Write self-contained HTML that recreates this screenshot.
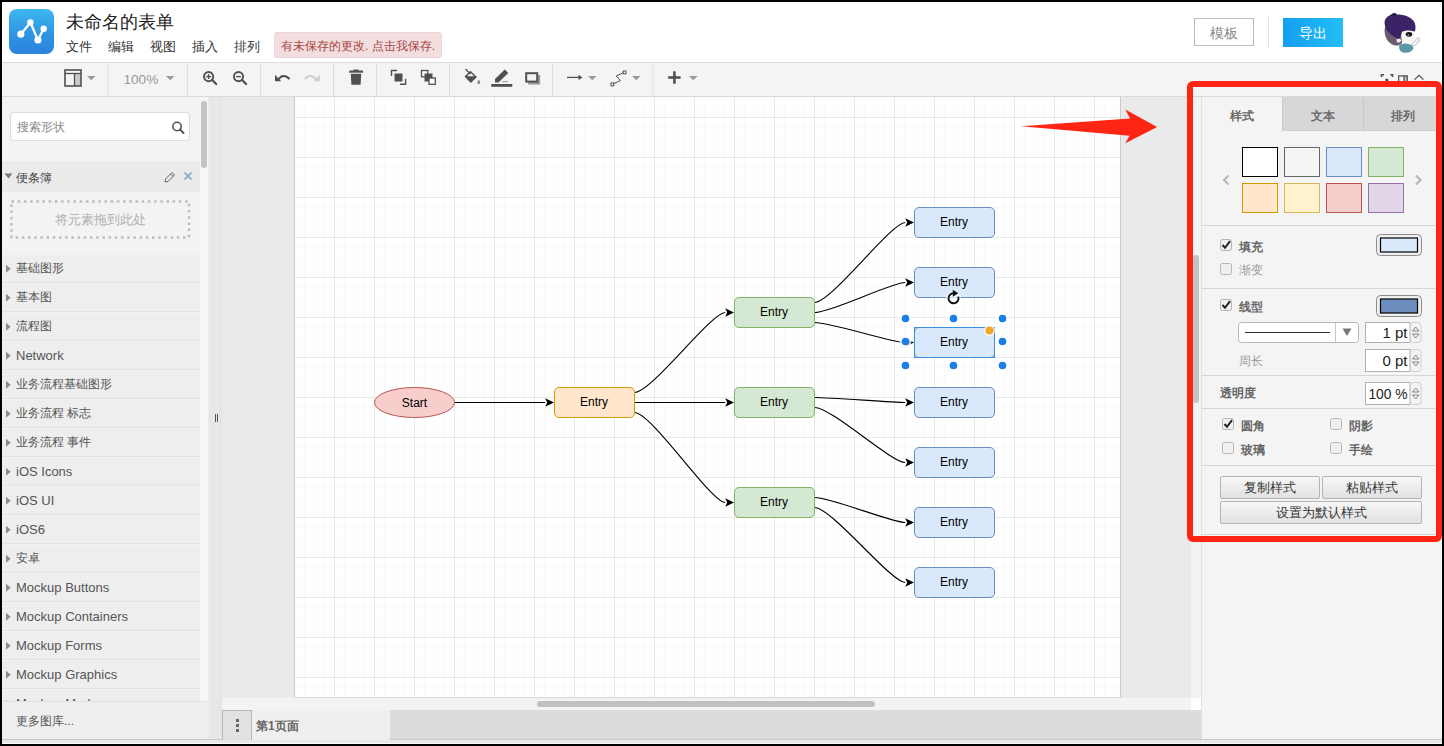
<!DOCTYPE html><html><head><meta charset="utf-8"><style>
*{box-sizing:border-box;margin:0;padding:0}
html,body{width:1444px;height:746px;overflow:hidden;background:#000;font-family:"Liberation Sans",sans-serif}
.a{position:absolute}
#app{position:absolute;left:2px;top:2px;width:1440px;height:742px;background:#f5f5f5;overflow:hidden}
</style></head><body>
<div id="app"><div class="a" style="left:-2px;top:-2px;width:1444px;height:746px">
<div class="a" style="left:0;top:0;width:1444px;height:63px;background:#fff;border-bottom:1px solid #dcdcdc"></div>
<div class="a" style="left:0;top:63px;width:1444px;height:34px;background:#f4f4f4;border-bottom:1px solid #dadada"></div>
<div class="a" style="left:0;top:97px;width:200px;height:609px;background:#f0f0f0"></div>
<div class="a" style="left:200px;top:97px;width:8px;height:613px;background:#f6f6f6"></div>
<div class="a" style="left:208px;top:97px;width:14px;height:643px;background:linear-gradient(90deg,#eeeeee 0px,#e5e5e5 2px,#e7e7e7 4px,#e7e7e7 11px,#e4e4e4 14px)"></div>
<div class="a" style="left:0;top:706px;width:208px;height:34px;background:#efefef;border-top:1px solid #e4e4e4"></div>
<div class="a" style="left:222px;top:97px;width:969px;height:601px;background:#eaeaea"></div>
<div class="a" style="left:294px;top:97px;width:826px;height:600px;background:#fff"></div>
<div class="a" style="left:1191px;top:97px;width:10px;height:613px;background:#f3f3f3"></div>
<div class="a" style="left:222px;top:698px;width:969px;height:12px;background:#f3f3f3"></div>
<div class="a" style="left:222px;top:710px;width:979px;height:30px;background:#dcdcdc"></div>
<div class="a" style="left:1201px;top:97px;width:243px;height:643px;background:#f4f4f4;border-left:1px solid #e2e2e2"></div>
<div class="a" style="left:0;top:739px;width:1444px;height:1px;background:#c8c8c8"></div>
<div class="a" style="left:0;top:740px;width:1444px;height:3px;background:#e8e8e8"></div><div class="a" style="left:0;top:743px;width:1444px;height:1px;background:#fafafa"></div>
<div class="a" style="left:294px;top:97px;width:826px;height:600px;background-color:#fff;background-image:linear-gradient(to right,#e8e8e8 1px,transparent 1px),linear-gradient(to bottom,#e8e8e8 1px,transparent 1px),linear-gradient(to right,#fafafa 1px,transparent 1px),linear-gradient(to bottom,#fafafa 1px,transparent 1px);background-size:40px 40px,40px 40px,10px 10px,10px 10px;background-position:0 20px,0 20px,0 0,0 0"></div>
<div class="a" style="left:294px;top:97px;width:1px;height:601px;background:#cbcbcb"></div>
<div class="a" style="left:1120px;top:97px;width:1px;height:601px;background:#cbcbcb"></div>
<div class="a" style="left:294px;top:697px;width:827px;height:1px;background:#d9d9d9"></div>
<svg class="a" style="left:0;top:0" width="1444" height="746" viewBox="0 0 1444 746"><defs><marker id="ah" markerWidth="10" markerHeight="10" refX="0" refY="5" orient="auto" markerUnits="userSpaceOnUse"><path d="M0,0.8 L8.8,5 L0,9.2 L2,5 Z" fill="#000"/></marker></defs><path d="M454.5,402.5 L545.2,402.5" stroke="#000" stroke-width="1.15" fill="none" marker-end="url(#ah)"/><path d="M634.5,392.5 C651.5,392.5 711.2,312.5 725.2,312.5" stroke="#000" stroke-width="1.15" fill="none" marker-end="url(#ah)"/><path d="M634.5,402.5 L725.2,402.5" stroke="#000" stroke-width="1.15" fill="none" marker-end="url(#ah)"/><path d="M634.5,412.5 C651.5,412.5 711.2,502.5 725.2,502.5" stroke="#000" stroke-width="1.15" fill="none" marker-end="url(#ah)"/><path d="M814.5,302.5 C831.5,302.5 891.2,222.5 905.2,222.5" stroke="#000" stroke-width="1.15" fill="none" marker-end="url(#ah)"/><path d="M814.5,312.5 C831.5,312.5 891.2,282.5 905.2,282.5" stroke="#000" stroke-width="1.15" fill="none" marker-end="url(#ah)"/><path d="M814.5,322.5 C831.5,322.5 891.2,342.5 905.2,342.5" stroke="#000" stroke-width="1.15" fill="none" marker-end="url(#ah)"/><path d="M814.5,397.5 C831.5,397.5 891.2,402.5 905.2,402.5" stroke="#000" stroke-width="1.15" fill="none" marker-end="url(#ah)"/><path d="M814.5,407.5 C831.5,407.5 891.2,462.5 905.2,462.5" stroke="#000" stroke-width="1.15" fill="none" marker-end="url(#ah)"/><path d="M814.5,497.5 C831.5,497.5 891.2,522.5 905.2,522.5" stroke="#000" stroke-width="1.15" fill="none" marker-end="url(#ah)"/><path d="M814.5,507.5 C831.5,507.5 891.2,582.5 905.2,582.5" stroke="#000" stroke-width="1.15" fill="none" marker-end="url(#ah)"/><ellipse cx="414.5" cy="402.5" rx="40" ry="15" fill="#f8cecc" stroke="#b85450"/><text x="414.5" y="406.5" text-anchor="middle" font-family="Liberation Sans" font-size="12" fill="#000">Start</text><rect x="554.5" y="387.5" width="80" height="30" rx="4.5" ry="4.5" fill="#ffe6cc" stroke="#d79b00"/><text x="594" y="405.8" text-anchor="middle" font-family="Liberation Sans" font-size="12" fill="#000">Entry</text><rect x="734.5" y="297.5" width="80" height="30" rx="4.5" ry="4.5" fill="#d5e8d4" stroke="#82b366"/><text x="774" y="315.8" text-anchor="middle" font-family="Liberation Sans" font-size="12" fill="#000">Entry</text><rect x="734.5" y="387.5" width="80" height="30" rx="4.5" ry="4.5" fill="#d5e8d4" stroke="#82b366"/><text x="774" y="405.8" text-anchor="middle" font-family="Liberation Sans" font-size="12" fill="#000">Entry</text><rect x="734.5" y="487.5" width="80" height="30" rx="4.5" ry="4.5" fill="#d5e8d4" stroke="#82b366"/><text x="774" y="505.8" text-anchor="middle" font-family="Liberation Sans" font-size="12" fill="#000">Entry</text><rect x="914.5" y="207.5" width="80" height="30" rx="4.5" ry="4.5" fill="#dae8fc" stroke="#6c8ebf"/><text x="954" y="225.8" text-anchor="middle" font-family="Liberation Sans" font-size="12" fill="#000">Entry</text><rect x="914.5" y="267.5" width="80" height="30" rx="4.5" ry="4.5" fill="#dae8fc" stroke="#6c8ebf"/><text x="954" y="285.8" text-anchor="middle" font-family="Liberation Sans" font-size="12" fill="#000">Entry</text><rect x="914.5" y="327.5" width="80" height="30" rx="4.5" ry="4.5" fill="#dae8fc" stroke="#6c8ebf"/><text x="954" y="345.8" text-anchor="middle" font-family="Liberation Sans" font-size="12" fill="#000">Entry</text><rect x="914.5" y="387.5" width="80" height="30" rx="4.5" ry="4.5" fill="#dae8fc" stroke="#6c8ebf"/><text x="954" y="405.8" text-anchor="middle" font-family="Liberation Sans" font-size="12" fill="#000">Entry</text><rect x="914.5" y="447.5" width="80" height="30" rx="4.5" ry="4.5" fill="#dae8fc" stroke="#6c8ebf"/><text x="954" y="465.8" text-anchor="middle" font-family="Liberation Sans" font-size="12" fill="#000">Entry</text><rect x="914.5" y="507.5" width="80" height="30" rx="4.5" ry="4.5" fill="#dae8fc" stroke="#6c8ebf"/><text x="954" y="525.8" text-anchor="middle" font-family="Liberation Sans" font-size="12" fill="#000">Entry</text><rect x="914.5" y="567.5" width="80" height="30" rx="4.5" ry="4.5" fill="#dae8fc" stroke="#6c8ebf"/><text x="954" y="585.8" text-anchor="middle" font-family="Liberation Sans" font-size="12" fill="#000">Entry</text><rect x="914.5" y="327.5" width="80" height="30" fill="none" stroke="#3d8fe0" stroke-width="1"/><circle cx="905.5" cy="318.5" r="6" fill="#fff" fill-opacity="0.8"/><circle cx="905.5" cy="318.5" r="3.8" fill="#1a7fe5"/><circle cx="905.5" cy="341.5" r="6" fill="#fff" fill-opacity="0.8"/><circle cx="905.5" cy="341.5" r="3.8" fill="#1a7fe5"/><circle cx="905.5" cy="365.5" r="6" fill="#fff" fill-opacity="0.8"/><circle cx="905.5" cy="365.5" r="3.8" fill="#1a7fe5"/><circle cx="953.5" cy="318.5" r="6" fill="#fff" fill-opacity="0.8"/><circle cx="953.5" cy="318.5" r="3.8" fill="#1a7fe5"/><circle cx="953.5" cy="365.5" r="6" fill="#fff" fill-opacity="0.8"/><circle cx="953.5" cy="365.5" r="3.8" fill="#1a7fe5"/><circle cx="1002.5" cy="318.5" r="6" fill="#fff" fill-opacity="0.8"/><circle cx="1002.5" cy="318.5" r="3.8" fill="#1a7fe5"/><circle cx="1002.5" cy="341.5" r="6" fill="#fff" fill-opacity="0.8"/><circle cx="1002.5" cy="341.5" r="3.8" fill="#1a7fe5"/><circle cx="1002.5" cy="365.5" r="6" fill="#fff" fill-opacity="0.8"/><circle cx="1002.5" cy="365.5" r="3.8" fill="#1a7fe5"/><circle cx="989.5" cy="330.5" r="5.5" fill="#fff" fill-opacity="0.8"/><circle cx="989.5" cy="330.5" r="4" fill="#f5a623"/><circle cx="953.5" cy="298.5" r="7.5" fill="#fff" fill-opacity="0.7"/><path d="M958.2,296.6 A5,5 0 1 1 953.5,293.3" fill="none" stroke="#111" stroke-width="1.9"/><path d="M952.8,289.8 L958.3,293.3 L952.8,296.8 Z" fill="#111"/></svg>
<div class="a" style="left:9px;top:9px;width:45px;height:45px;border-radius:8px;background:linear-gradient(180deg,#3cb8f0 0%,#2f95e3 55%,#2a82dc 100%)"></div>
<svg class="a" style="left:9px;top:9px" width="45" height="45" viewBox="0 0 45 45"><polyline points="11.8,25.2 21.4,13.5 28.9,31 34.7,19.7" fill="none" stroke="#fff" stroke-width="2.2" stroke-linejoin="round"/><circle cx="11.8" cy="25.2" r="3.6" fill="#fff"/><circle cx="21.4" cy="13.5" r="3.2" fill="#fff"/><circle cx="28.9" cy="31" r="3.6" fill="#fff"/><circle cx="34.7" cy="19.7" r="3.2" fill="#fff"/></svg>
<div class="a" style="left:66px;top:11px;font-size:18px;line-height:22px;color:#222;white-space:nowrap">未命名的表单</div>
<div class="a" style="left:66px;top:38px;font-size:13px;line-height:17px;color:#333;white-space:nowrap">文件</div>
<div class="a" style="left:108px;top:38px;font-size:13px;line-height:17px;color:#333;white-space:nowrap">编辑</div>
<div class="a" style="left:150px;top:38px;font-size:13px;line-height:17px;color:#333;white-space:nowrap">视图</div>
<div class="a" style="left:192px;top:38px;font-size:13px;line-height:17px;color:#333;white-space:nowrap">插入</div>
<div class="a" style="left:234px;top:38px;font-size:13px;line-height:17px;color:#333;white-space:nowrap">排列</div>
<div class="a" style="left:274px;top:32px;width:168px;height:26px;background:#f2dede;border:1px solid #ecd3d6;border-radius:3px;font-size:12px;line-height:26px;color:#a94442;padding-left:6px;white-space:nowrap">有未保存的更改. 点击我保存.</div>
<div class="a" style="left:1194px;top:18px;width:60px;height:28px;border:1px solid #bdbdbd;background:#fff;font-size:14px;line-height:28px;color:#888;text-align:center">模板</div>
<div class="a" style="left:1268px;top:17px;width:1px;height:31px;background:#e4e4e4"></div>
<div class="a" style="left:1283px;top:18px;width:60px;height:29px;background:linear-gradient(90deg,#139ff0,#24bdf6);font-size:14px;line-height:31px;color:#fff;text-align:center">导出</div>
<svg class="a" style="left:1376px;top:8px" width="56" height="50" viewBox="1376 8 56 50"><path d="M1385,27 C1383.5,34 1386,41 1392,44.5 C1396,46.5 1400,45.5 1402,43 L1401,31 Z" fill="#6e5a72"/><path d="M1399.5,44.5 C1398.5,48 1399.5,51.5 1403,52.5 C1408,53.5 1412.5,51.5 1413.5,48 C1413,45 1409,43.5 1405,43.5 Z" fill="#5b97a4"/><path d="M1411.5,45 C1413.5,42 1416.5,38.5 1418.5,37.5 C1420,38 1419.8,41 1418,43 C1416,45.5 1413,46.5 1411.5,45 Z" fill="#f0f0f0" stroke="#a8a8a8" stroke-width="0.7"/><path d="M1401.5,32 C1404,30.5 1411,30.5 1414.5,32.5 C1416,35.5 1415.5,40 1413,42.5 C1409.5,44 1404,43.5 1402,41 Z" fill="#fbf5f0"/><ellipse cx="1409" cy="34.3" rx="3.2" ry="2.4" fill="#14101e"/><circle cx="1408.3" cy="35" r="0.8" fill="#d8c8b8"/><path d="M1396.5,39.5 C1397.5,38 1400,38 1401,40 C1401.2,42 1399,43.2 1397,42.3 Z" fill="#f2ecef"/><path d="M1384.5,23 C1384.5,17.5 1389,14.5 1394,14.5 C1402,13.8 1412,16 1414.8,23 C1416,27 1415.5,31 1414.5,31.5 C1410,30 1405,30 1402,32 C1401,35 1400,37.5 1399,39 C1394,37.5 1388.5,33 1385.5,28.5 Z" fill="#3a2467"/><path d="M1390.5,15.5 C1391.5,13 1394.5,12.3 1396.5,13.5 L1396,16.5 Z" fill="#2a1b45"/></svg>
<svg class="a" style="left:0;top:62px" width="1444" height="35" viewBox="0 62 1444 35"><line x1="108" y1="63" x2="108" y2="96" stroke="#dedede" stroke-width="1"/><line x1="187.5" y1="63" x2="187.5" y2="96" stroke="#dedede" stroke-width="1"/><line x1="260.5" y1="63" x2="260.5" y2="96" stroke="#dedede" stroke-width="1"/><line x1="333.5" y1="63" x2="333.5" y2="96" stroke="#dedede" stroke-width="1"/><line x1="376.5" y1="63" x2="376.5" y2="96" stroke="#dedede" stroke-width="1"/><line x1="449.5" y1="63" x2="449.5" y2="96" stroke="#dedede" stroke-width="1"/><line x1="552.5" y1="63" x2="552.5" y2="96" stroke="#dedede" stroke-width="1"/><line x1="653" y1="63" x2="653" y2="96" stroke="#dedede" stroke-width="1"/><rect x="74.5" y="73.5" width="6" height="12" fill="#c8c8c8"/><rect x="65" y="70" width="16" height="16" fill="none" stroke="#505050" stroke-width="1.6"/><line x1="65" y1="73.5" x2="81" y2="73.5" stroke="#505050" stroke-width="1.3"/><line x1="74.5" y1="73.5" x2="74.5" y2="86" stroke="#505050" stroke-width="1.3"/><path d="M87,76 L95.5,76 L91.25,80.3 Z" fill="#9a9a9a"/><path d="M166,76 L174.5,76 L170.25,80.3 Z" fill="#9a9a9a"/><path d="M588,76 L596.5,76 L592.25,80.3 Z" fill="#9a9a9a"/><path d="M632,76 L640.5,76 L636.25,80.3 Z" fill="#9a9a9a"/><path d="M689,76 L697.5,76 L693.25,80.3 Z" fill="#9a9a9a"/><text x="123.5" y="84" font-family="Liberation Sans" font-size="13.6" fill="#999">100%</text><circle cx="208.6" cy="76.6" r="4.6" fill="none" stroke="#505050" stroke-width="1.9"/><line x1="212.2" y1="80" x2="216.2" y2="84" stroke="#505050" stroke-width="2.2" stroke-linecap="round"/><line x1="206.2" y1="76.6" x2="211.0" y2="76.6" stroke="#505050" stroke-width="1.4"/><line x1="208.6" y1="74.2" x2="208.6" y2="79" stroke="#505050" stroke-width="1.4"/><circle cx="238.5" cy="76.6" r="4.6" fill="none" stroke="#505050" stroke-width="1.9"/><line x1="242.1" y1="80" x2="246.1" y2="84" stroke="#505050" stroke-width="2.2" stroke-linecap="round"/><line x1="236.1" y1="76.6" x2="240.9" y2="76.6" stroke="#505050" stroke-width="1.4"/><path d="M278.5,79.5 C281,75 286,74.5 289.5,79.2" fill="none" stroke="#505050" stroke-width="2"/><path d="M275,74.8 L275,81.2 L281.2,81.2 Z" fill="#505050"/><path d="M315.8,79.5 C313.3,75 308.3,74.5 304.8,79.2" fill="none" stroke="#cfcfcf" stroke-width="2"/><path d="M319.8,74.8 L319.8,81.2 L313.6,81.2 Z" fill="#cfcfcf"/><rect x="349.2" y="70.5" width="13.8" height="2.2" fill="#505050"/><rect x="353.5" y="69.5" width="5" height="1.5" fill="#505050"/><path d="M350.8,73.7 L361.2,73.7 L360.6,84.8 L351.4,84.8 Z" fill="#505050"/><path d="M391.5,76 L391.5,70.5 L397,70.5" fill="none" stroke="#505050" stroke-width="1.4"/><rect x="394.5" y="73.5" width="8" height="8" fill="#505050"/><path d="M400,84.3 L405.6,84.3 L405.6,78.8" fill="none" stroke="#505050" stroke-width="1.4"/><rect x="421.5" y="70.5" width="6.3" height="6.3" fill="#fff" stroke="#505050" stroke-width="1.3"/><rect x="424.5" y="73.5" width="8" height="8" fill="#505050"/><rect x="429" y="78" width="6.3" height="6.3" fill="#fff" stroke="#505050" stroke-width="1.3"/><path d="M464.5,76.5 L470.5,70.8 L477,77 L470.8,83 Z" fill="#505050"/><path d="M467,76.3 L470.6,72.8 L474.3,76.3 Z" fill="#f4f4f4"/><line x1="465.5" y1="69" x2="470.5" y2="74" stroke="#505050" stroke-width="1.2"/><path d="M478.8,79.5 C478,81 477.3,81.8 477.3,82.6 A1.5,1.5 0 0 0 480.3,82.6 C480.3,81.8 479.6,81 478.8,79.5 Z" fill="#888"/><path d="M495,79 L504.8,69.5 L508.3,73 L498.5,82.5 L495,82.5 Z" fill="#505050"/><line x1="502" y1="81.6" x2="508" y2="81.6" stroke="#888" stroke-width="0.8"/><rect x="491.3" y="84" width="21" height="2.8" fill="#505050"/><rect x="528.2" y="75" width="12" height="9.6" fill="#9a9a9a"/><rect x="526.2" y="73.2" width="11" height="8.4" fill="#f4f4f4" stroke="#505050" stroke-width="2"/><line x1="567" y1="77.4" x2="581" y2="77.4" stroke="#505050" stroke-width="1.3"/><path d="M578.5,74.8 L582.5,77.4 L578.5,80 Z" fill="#505050"/><path d="M613.7,83.6 L620.4,80.6 L616.3,75.9 L623.2,72.8" fill="none" stroke="#505050" stroke-width="1"/><rect x="611" y="83" width="2.8" height="2.8" fill="#fff" stroke="#505050" stroke-width="1"/><rect x="623.2" y="71" width="2.8" height="2.8" fill="#fff" stroke="#505050" stroke-width="1"/><line x1="668.2" y1="77.5" x2="680.6" y2="77.5" stroke="#505050" stroke-width="2.6"/><line x1="674.4" y1="71.3" x2="674.4" y2="83.7" stroke="#505050" stroke-width="2.6"/><path d="M1381.5,77 L1381.5,74.7 L1384,74.7 M1390.3,74.7 L1392.5,74.7 L1392.5,77" fill="none" stroke="#505050" stroke-width="1.6"/><rect x="1385.3" y="78.8" width="3" height="3" fill="#505050"/><rect x="1404" y="76" width="3" height="6" fill="#bbb"/><path d="M1398.7,82 L1398.7,75.8 L1407.3,75.8 L1407.3,82 M1404,75.8 L1404,82" fill="none" stroke="#505050" stroke-width="1.2"/><path d="M1414.5,79.6 L1419,75.3 L1423.5,79.6" fill="none" stroke="#505050" stroke-width="1.3"/></svg>
<div class="a" style="left:2px;top:97px;width:198px;height:65px;background:#f3f3f3"></div>
<div class="a" style="left:10px;top:112px;width:180px;height:29px;background:#fff;border:1px solid #dcdcdc;border-radius:4px"></div>
<div class="a" style="left:17px;top:119px;font-size:12px;line-height:16px;color:#8a8a8a;white-space:nowrap">搜索形状</div>
<svg class="a" style="left:170px;top:119px" width="16" height="16" viewBox="0 0 16 16"><circle cx="7" cy="7.5" r="4.2" fill="none" stroke="#555" stroke-width="1.6"/><line x1="10" y1="10.5" x2="13.5" y2="14" stroke="#555" stroke-width="2" stroke-linecap="round"/></svg>
<div class="a" style="left:2px;top:162px;width:198px;height:30px;background:#ebebeb;border-top:1px solid #e3e3e3"></div>
<svg class="a" style="left:0;top:160px" width="200" height="34" viewBox="0 160 200 34"><path d="M4.5,173.5 L12.5,173.5 L8.5,178.5 Z" fill="#777"/><path d="M165,182 L165.5,179 L172,172.5 L174.5,175 L168,181.5 Z" fill="none" stroke="#666" stroke-width="1"/><line x1="170.5" y1="174" x2="173" y2="176.5" stroke="#666" stroke-width="1"/><path d="M184.5,172.5 L191.5,179.5 M191.5,172.5 L184.5,179.5" stroke="#8fb2d4" stroke-width="1.8"/></svg>
<div class="a" style="left:16px;top:170px;font-size:12px;line-height:16px;color:#444;white-space:nowrap">便条簿</div>
<div class="a" style="left:2px;top:192px;width:198px;height:62px;background:#f3f3f3"></div>
<svg class="a" style="left:0;top:190px" width="200" height="60" viewBox="0 190 200 60"><rect x="11.5" y="201.5" width="177.5" height="36" fill="none" stroke="#bdbdbd" stroke-width="2.4" stroke-dasharray="2.5 3.7"/></svg>
<div class="a" style="left:10px;top:212px;width:180px;text-align:center;font-size:13px;line-height:16px;color:#b0b0b0;white-space:nowrap">将元素拖到此处</div>
<div class="a" style="left:2px;top:254px;width:198px;height:29px;background:#eeeeee;border-bottom:1px solid #e3e3e3;border-top:1px solid #f3f3f3"></div>
<svg class="a" style="left:5px;top:264px" width="7" height="10"><path d="M1,0.8 L5.6,4.8 L1,8.8 Z" fill="#8a8a8a"/></svg>
<div class="a" style="left:16px;top:260px;font-size:12px;line-height:17px;color:#555;white-space:nowrap">基础图形</div>
<div class="a" style="left:2px;top:283px;width:198px;height:29px;background:#eeeeee;border-bottom:1px solid #e3e3e3;border-top:1px solid #f3f3f3"></div>
<svg class="a" style="left:5px;top:293px" width="7" height="10"><path d="M1,0.8 L5.6,4.8 L1,8.8 Z" fill="#8a8a8a"/></svg>
<div class="a" style="left:16px;top:289px;font-size:12px;line-height:17px;color:#555;white-space:nowrap">基本图</div>
<div class="a" style="left:2px;top:312px;width:198px;height:29px;background:#eeeeee;border-bottom:1px solid #e3e3e3;border-top:1px solid #f3f3f3"></div>
<svg class="a" style="left:5px;top:322px" width="7" height="10"><path d="M1,0.8 L5.6,4.8 L1,8.8 Z" fill="#8a8a8a"/></svg>
<div class="a" style="left:16px;top:318px;font-size:12px;line-height:17px;color:#555;white-space:nowrap">流程图</div>
<div class="a" style="left:2px;top:341px;width:198px;height:29px;background:#eeeeee;border-bottom:1px solid #e3e3e3;border-top:1px solid #f3f3f3"></div>
<svg class="a" style="left:5px;top:351px" width="7" height="10"><path d="M1,0.8 L5.6,4.8 L1,8.8 Z" fill="#8a8a8a"/></svg>
<div class="a" style="left:16px;top:347px;font-size:13px;line-height:17px;color:#555;white-space:nowrap">Network</div>
<div class="a" style="left:2px;top:370px;width:198px;height:29px;background:#eeeeee;border-bottom:1px solid #e3e3e3;border-top:1px solid #f3f3f3"></div>
<svg class="a" style="left:5px;top:380px" width="7" height="10"><path d="M1,0.8 L5.6,4.8 L1,8.8 Z" fill="#8a8a8a"/></svg>
<div class="a" style="left:16px;top:376px;font-size:12px;line-height:17px;color:#555;white-space:nowrap">业务流程基础图形</div>
<div class="a" style="left:2px;top:399px;width:198px;height:29px;background:#eeeeee;border-bottom:1px solid #e3e3e3;border-top:1px solid #f3f3f3"></div>
<svg class="a" style="left:5px;top:409px" width="7" height="10"><path d="M1,0.8 L5.6,4.8 L1,8.8 Z" fill="#8a8a8a"/></svg>
<div class="a" style="left:16px;top:405px;font-size:12px;line-height:17px;color:#555;white-space:nowrap">业务流程 标志</div>
<div class="a" style="left:2px;top:428px;width:198px;height:29px;background:#eeeeee;border-bottom:1px solid #e3e3e3;border-top:1px solid #f3f3f3"></div>
<svg class="a" style="left:5px;top:438px" width="7" height="10"><path d="M1,0.8 L5.6,4.8 L1,8.8 Z" fill="#8a8a8a"/></svg>
<div class="a" style="left:16px;top:434px;font-size:12px;line-height:17px;color:#555;white-space:nowrap">业务流程 事件</div>
<div class="a" style="left:2px;top:457px;width:198px;height:29px;background:#eeeeee;border-bottom:1px solid #e3e3e3;border-top:1px solid #f3f3f3"></div>
<svg class="a" style="left:5px;top:467px" width="7" height="10"><path d="M1,0.8 L5.6,4.8 L1,8.8 Z" fill="#8a8a8a"/></svg>
<div class="a" style="left:16px;top:463px;font-size:13px;line-height:17px;color:#555;white-space:nowrap">iOS Icons</div>
<div class="a" style="left:2px;top:486px;width:198px;height:29px;background:#eeeeee;border-bottom:1px solid #e3e3e3;border-top:1px solid #f3f3f3"></div>
<svg class="a" style="left:5px;top:496px" width="7" height="10"><path d="M1,0.8 L5.6,4.8 L1,8.8 Z" fill="#8a8a8a"/></svg>
<div class="a" style="left:16px;top:492px;font-size:13px;line-height:17px;color:#555;white-space:nowrap">iOS UI</div>
<div class="a" style="left:2px;top:515px;width:198px;height:29px;background:#eeeeee;border-bottom:1px solid #e3e3e3;border-top:1px solid #f3f3f3"></div>
<svg class="a" style="left:5px;top:525px" width="7" height="10"><path d="M1,0.8 L5.6,4.8 L1,8.8 Z" fill="#8a8a8a"/></svg>
<div class="a" style="left:16px;top:521px;font-size:13px;line-height:17px;color:#555;white-space:nowrap">iOS6</div>
<div class="a" style="left:2px;top:544px;width:198px;height:29px;background:#eeeeee;border-bottom:1px solid #e3e3e3;border-top:1px solid #f3f3f3"></div>
<svg class="a" style="left:5px;top:554px" width="7" height="10"><path d="M1,0.8 L5.6,4.8 L1,8.8 Z" fill="#8a8a8a"/></svg>
<div class="a" style="left:16px;top:550px;font-size:12px;line-height:17px;color:#555;white-space:nowrap">安卓</div>
<div class="a" style="left:2px;top:573px;width:198px;height:29px;background:#eeeeee;border-bottom:1px solid #e3e3e3;border-top:1px solid #f3f3f3"></div>
<svg class="a" style="left:5px;top:583px" width="7" height="10"><path d="M1,0.8 L5.6,4.8 L1,8.8 Z" fill="#8a8a8a"/></svg>
<div class="a" style="left:16px;top:579px;font-size:13px;line-height:17px;color:#555;white-space:nowrap">Mockup Buttons</div>
<div class="a" style="left:2px;top:602px;width:198px;height:29px;background:#eeeeee;border-bottom:1px solid #e3e3e3;border-top:1px solid #f3f3f3"></div>
<svg class="a" style="left:5px;top:612px" width="7" height="10"><path d="M1,0.8 L5.6,4.8 L1,8.8 Z" fill="#8a8a8a"/></svg>
<div class="a" style="left:16px;top:608px;font-size:13px;line-height:17px;color:#555;white-space:nowrap">Mockup Containers</div>
<div class="a" style="left:2px;top:631px;width:198px;height:29px;background:#eeeeee;border-bottom:1px solid #e3e3e3;border-top:1px solid #f3f3f3"></div>
<svg class="a" style="left:5px;top:641px" width="7" height="10"><path d="M1,0.8 L5.6,4.8 L1,8.8 Z" fill="#8a8a8a"/></svg>
<div class="a" style="left:16px;top:637px;font-size:13px;line-height:17px;color:#555;white-space:nowrap">Mockup Forms</div>
<div class="a" style="left:2px;top:660px;width:198px;height:29px;background:#eeeeee;border-bottom:1px solid #e3e3e3;border-top:1px solid #f3f3f3"></div>
<svg class="a" style="left:5px;top:670px" width="7" height="10"><path d="M1,0.8 L5.6,4.8 L1,8.8 Z" fill="#8a8a8a"/></svg>
<div class="a" style="left:16px;top:666px;font-size:13px;line-height:17px;color:#555;white-space:nowrap">Mockup Graphics</div>
<div class="a" style="left:2px;top:689px;width:198px;height:29px;background:#eeeeee;border-bottom:1px solid #e3e3e3;border-top:1px solid #f3f3f3"></div>
<svg class="a" style="left:5px;top:699px" width="7" height="10"><path d="M1,0.8 L5.6,4.8 L1,8.8 Z" fill="#8a8a8a"/></svg>
<div class="a" style="left:16px;top:695px;font-size:13px;line-height:17px;color:#555;white-space:nowrap">Mockup Markup</div>
<div class="a" style="left:2px;top:701px;width:206px;height:38px;background:#efefef;border-top:1px solid #e2e2e2"></div>
<div class="a" style="left:16px;top:713px;font-size:12px;line-height:17px;color:#555;white-space:nowrap">更多图库...</div>
<div class="a" style="left:201px;top:101px;width:6px;height:67px;border-radius:3px;background:#c3c3c3"></div>
<div class="a" style="left:214.5px;top:414px;width:1.2px;height:8px;background:#555"></div>
<div class="a" style="left:217.3px;top:414px;width:1.2px;height:8px;background:#555"></div>
<div class="a" style="left:1282px;top:97px;width:81px;height:34px;background:#d7d7d7;border-left:1px solid #c9c9c9;border-bottom:1px solid #cfcfcf"></div>
<div class="a" style="left:1363px;top:97px;width:81px;height:34px;background:#d7d7d7;border-left:1px solid #c9c9c9;border-bottom:1px solid #cfcfcf"></div>
<div class="a" style="left:1211.6px;top:108px;width:60px;text-align:center;font-size:12px;line-height:16px;font-weight:bold;color:#6a6a6a;white-space:nowrap">样式</div>
<div class="a" style="left:1293px;top:108px;width:60px;text-align:center;font-size:12px;line-height:16px;font-weight:bold;color:#6a6a6a;white-space:nowrap">文本</div>
<div class="a" style="left:1373px;top:108px;width:60px;text-align:center;font-size:12px;line-height:16px;font-weight:bold;color:#6a6a6a;white-space:nowrap">排列</div>
<div class="a" style="left:1242px;top:147px;width:36px;height:30px;background:#ffffff;border:1.5px solid #000000"></div>
<div class="a" style="left:1284px;top:147px;width:36px;height:30px;background:#f5f5f5;border:1.5px solid #666666"></div>
<div class="a" style="left:1326px;top:147px;width:36px;height:30px;background:#dae8fc;border:1.5px solid #6c8ebf"></div>
<div class="a" style="left:1368px;top:147px;width:36px;height:30px;background:#d5e8d4;border:1.5px solid #82b366"></div>
<div class="a" style="left:1242px;top:183px;width:36px;height:30px;background:#ffe6cc;border:1.5px solid #d79b00"></div>
<div class="a" style="left:1284px;top:183px;width:36px;height:30px;background:#fff2cc;border:1.5px solid #d6b656"></div>
<div class="a" style="left:1326px;top:183px;width:36px;height:30px;background:#f8cecc;border:1.5px solid #b85450"></div>
<div class="a" style="left:1368px;top:183px;width:36px;height:30px;background:#e1d5e7;border:1.5px solid #9673a6"></div>
<svg class="a" style="left:1190px;top:95px" width="254" height="450" viewBox="1190 95 254 450"><path d="M1228.5,175.5 L1224,180 L1228.5,184.5" fill="none" stroke="#b8b8b8" stroke-width="2.2"/><path d="M1416,175.5 L1420.5,180 L1416,184.5" fill="none" stroke="#b8b8b8" stroke-width="2.2"/><line x1="1201" y1="225.5" x2="1436" y2="225.5" stroke="#d6d6d6" stroke-width="1"/><line x1="1201" y1="288.5" x2="1436" y2="288.5" stroke="#d6d6d6" stroke-width="1"/><line x1="1201" y1="375.5" x2="1436" y2="375.5" stroke="#d6d6d6" stroke-width="1"/><line x1="1201" y1="408.5" x2="1436" y2="408.5" stroke="#d6d6d6" stroke-width="1"/><line x1="1201" y1="465.5" x2="1436" y2="465.5" stroke="#d6d6d6" stroke-width="1"/><line x1="1201" y1="534.5" x2="1436" y2="534.5" stroke="#d6d6d6" stroke-width="1"/><rect x="1220.5" y="239.5" width="11" height="11" rx="2" fill="#f0f0f0" stroke="#b5b5b5"/><path d="M1222.5,245 L1225,247.8 L1230,241.2" fill="none" stroke="#222" stroke-width="2"/><rect x="1220.5" y="263.5" width="11" height="11" rx="2" fill="#f0f0f0" stroke="#b5b5b5"/><rect x="1220.5" y="299.5" width="11" height="11" rx="2" fill="#f0f0f0" stroke="#b5b5b5"/><path d="M1222.5,305 L1225,307.8 L1230,301.2" fill="none" stroke="#222" stroke-width="2"/><rect x="1222.5" y="418.5" width="11" height="11" rx="2" fill="#f0f0f0" stroke="#b5b5b5"/><path d="M1224.5,424 L1227,426.8 L1232,420.2" fill="none" stroke="#222" stroke-width="2"/><rect x="1330.5" y="418.5" width="11" height="11" rx="2" fill="#f0f0f0" stroke="#b5b5b5"/><rect x="1222.5" y="442.5" width="11" height="11" rx="2" fill="#f0f0f0" stroke="#b5b5b5"/><rect x="1330.5" y="442.5" width="11" height="11" rx="2" fill="#f0f0f0" stroke="#b5b5b5"/><rect x="1376.5" y="234.5" width="45" height="21" rx="4" fill="#efefef" stroke="#8c8c8c"/><rect x="1380.5" y="238" width="37" height="14" fill="#dae8fc" stroke="#000" stroke-width="1.2"/><rect x="1376.5" y="295.5" width="45" height="21" rx="4" fill="#efefef" stroke="#8c8c8c"/><rect x="1380.5" y="299" width="37" height="14" fill="#6c8ebf" stroke="#000" stroke-width="1.2"/><rect x="1238.5" y="322.5" width="120" height="20" rx="3" fill="#fff" stroke="#b9b9b9"/><line x1="1335.5" y1="323" x2="1335.5" y2="342" stroke="#c6c6c6"/><line x1="1245" y1="332.5" x2="1330" y2="332.5" stroke="#333" stroke-width="1"/><path d="M1342.5,328.5 L1351.5,328.5 L1347,336 Z" fill="#777"/><rect x="1365.5" y="322.5" width="44.5" height="20" fill="#fff" stroke="#b0b0b0"/><rect x="1410.5" y="322.5" width="10.5" height="20" rx="3" fill="#f3f3f3" stroke="#cfcfcf"/><path d="M1412.5,331.0 L1415.75,327.0 L1419,331.0 Z M1412.5,334.0 L1415.75,338.0 L1419,334.0 Z" fill="none" stroke="#777" stroke-width="0.9"/><text x="1407.5" y="337.5" text-anchor="end" font-family="Liberation Sans" font-size="15" fill="#222">1 pt</text><rect x="1365.5" y="349.5" width="44.5" height="22" fill="#fff" stroke="#b0b0b0"/><rect x="1410.5" y="349.5" width="10.5" height="22" rx="3" fill="#f3f3f3" stroke="#cfcfcf"/><path d="M1412.5,359.0 L1415.75,355.0 L1419,359.0 Z M1412.5,362.0 L1415.75,366.0 L1419,362.0 Z" fill="none" stroke="#777" stroke-width="0.9"/><text x="1407.5" y="365.5" text-anchor="end" font-family="Liberation Sans" font-size="15" fill="#222">0 pt</text><rect x="1365.5" y="382.5" width="44.5" height="22" fill="#fff" stroke="#b0b0b0"/><rect x="1410.5" y="382.5" width="10.5" height="22" rx="3" fill="#f3f3f3" stroke="#cfcfcf"/><path d="M1412.5,392.0 L1415.75,388.0 L1419,392.0 Z M1412.5,395.0 L1415.75,399.0 L1419,395.0 Z" fill="none" stroke="#777" stroke-width="0.9"/><text x="1407.5" y="398.5" text-anchor="end" font-family="Liberation Sans" font-size="13.8" fill="#222">100 %</text></svg>
<div class="a" style="left:1239px;top:239px;font-size:12px;line-height:16px;font-weight:bold;color:#666;white-space:nowrap">填充</div>
<div class="a" style="left:1239px;top:262px;font-size:12px;line-height:16px;font-weight:normal;color:#999;white-space:nowrap">渐变</div>
<div class="a" style="left:1239px;top:299px;font-size:12px;line-height:16px;font-weight:bold;color:#666;white-space:nowrap">线型</div>
<div class="a" style="left:1239px;top:353px;font-size:12px;line-height:16px;font-weight:normal;color:#999;white-space:nowrap">周长</div>
<div class="a" style="left:1220px;top:385px;font-size:12px;line-height:16px;font-weight:bold;color:#666;white-space:nowrap">透明度</div>
<div class="a" style="left:1241px;top:418px;font-size:12px;line-height:16px;font-weight:bold;color:#666;white-space:nowrap">圆角</div>
<div class="a" style="left:1349px;top:418px;font-size:12px;line-height:16px;font-weight:bold;color:#666;white-space:nowrap">阴影</div>
<div class="a" style="left:1241px;top:442px;font-size:12px;line-height:16px;font-weight:bold;color:#666;white-space:nowrap">玻璃</div>
<div class="a" style="left:1349px;top:442px;font-size:12px;line-height:16px;font-weight:bold;color:#666;white-space:nowrap">手绘</div>
<div class="a" style="left:1220px;top:476px;width:100px;height:23px;border:1px solid #b4b4b4;border-radius:2px;background:linear-gradient(#f7f7f7,#e1e1e1);text-align:center;font-size:13px;line-height:21px;color:#333;white-space:nowrap">复制样式</div>
<div class="a" style="left:1322px;top:476px;width:100px;height:23px;border:1px solid #b4b4b4;border-radius:2px;background:linear-gradient(#f7f7f7,#e1e1e1);text-align:center;font-size:13px;line-height:21px;color:#333;white-space:nowrap">粘贴样式</div>
<div class="a" style="left:1220px;top:501px;width:202px;height:23px;border:1px solid #b4b4b4;border-radius:2px;background:linear-gradient(#f7f7f7,#e1e1e1);text-align:center;font-size:13px;line-height:21px;color:#333;white-space:nowrap">设置为默认样式</div>
<div class="a" style="left:1193px;top:255px;width:6px;height:148px;border-radius:3px;background:#c4c4c4"></div>
<div class="a" style="left:1187px;top:81px;width:255px;height:461px;border:6px solid #ff2515;border-radius:6px"></div>
<svg class="a" style="left:1010px;top:100px" width="160" height="55" viewBox="1010 100 160 55"><path d="M1020.8,126.3 L1130,118.4 L1125.3,109.4 L1157.2,127.1 L1125.3,143.3 L1129.5,135.7 Z" fill="#ff2515"/></svg>
<div class="a" style="left:1191px;top:698px;width:10px;height:12px;background:#fff"></div>
<div class="a" style="left:537px;top:701px;width:338px;height:6px;border-radius:3px;background:#c1c1c1"></div>
<div class="a" style="left:222px;top:710px;width:30px;height:30px;background:#e1e1e1;border:1px solid #b9b9b9;border-bottom:none"></div>
<div class="a" style="left:235.5px;top:719px;width:3px;height:3px;background:#666"></div>
<div class="a" style="left:235.5px;top:724px;width:3px;height:3px;background:#666"></div>
<div class="a" style="left:235.5px;top:729px;width:3px;height:3px;background:#666"></div>
<div class="a" style="left:252px;top:710px;width:138px;height:30px;background:#efefef"></div>
<div class="a" style="left:256px;top:718px;font-size:12px;line-height:16px;font-weight:bold;color:#666;white-space:nowrap">第1页面</div>
</div></div></body></html>
